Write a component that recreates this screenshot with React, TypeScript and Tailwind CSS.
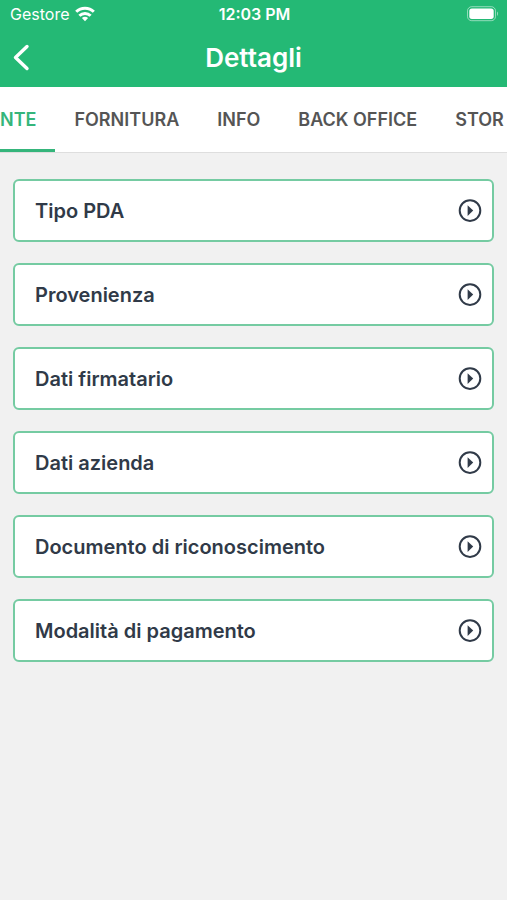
import { useState } from 'react';
import clsx from 'clsx';

const tabs = ['NTE', 'FORNITURA', 'INFO', 'BACK OFFICE', 'STOR'];

const sections = [
  'Tipo PDA',
  'Provenienza',
  'Dati firmatario',
  'Dati azienda',
  'Documento di riconoscimento',
  'Modalità di pagamento',
];

const WifiIcon = () => (
  <svg className="h-4 w-5" viewBox="0 0 20 16" fill="none" stroke="currentColor" strokeWidth="3" aria-hidden="true">
    <path d="M1.2 5.8a12.6 12.6 0 0 1 17.6 0" />
    <path d="M4.4 9.7a8 8 0 0 1 11.2 0" />
    <path d="M10 15.2 6.9 12.1a4.5 4.5 0 0 1 6.2 0Z" fill="currentColor" stroke="none" />
  </svg>
);

const BatteryIcon = () => (
  <svg className="h-4 w-8" viewBox="0 0 32 16" fill="none" aria-hidden="true">
    <rect x="0.5" y="0.7" width="28" height="14" rx="4.2" stroke="#fff" strokeOpacity="0.5" />
    <rect x="2.3" y="2.5" width="24.4" height="10.4" rx="2.6" fill="#fff" />
    <path d="M30 5.5c1.4.6 1.4 3.8 0 4.4Z" fill="#fff" fillOpacity="0.5" />
  </svg>
);

const PlayCircleIcon = () => (
  <svg className="h-6 w-6 shrink-0" viewBox="0 0 24 24" aria-hidden="true">
    <circle cx="12" cy="11.6" r="10.3" fill="none" stroke="currentColor" strokeWidth="2" />
    <path d="M9.6 6.2 15.2 11.6l-5.6 5.4Z" fill="currentColor" />
  </svg>
);

const StatusBar = () => (
  <div className="grid h-7 grid-cols-3 items-center pr-2 pl-2.5 text-base">
    <div className="flex items-center gap-1.5">
      <span>Gestore</span>
      <WifiIcon />
    </div>
    <span className="text-center font-semibold">12:03 PM</span>
    <div className="flex justify-end">
      <BatteryIcon />
    </div>
  </div>
);

const App = () => {
  const [activeTab, setActiveTab] = useState('NTE');

  return (
    <div className="min-h-screen bg-[#f1f1f1] font-['Inter',sans-serif]">
      <header className="bg-[#24b975] text-white">
        <StatusBar />
        <div className="grid h-[59px] grid-cols-[48px_1fr_48px] items-center">
          <button type="button" aria-label="Indietro" className="pl-3">
            <svg
              className="h-7 w-5"
              viewBox="0 0 20 28"
              fill="none"
              stroke="currentColor"
              strokeWidth="3.4"
              strokeLinecap="round"
              strokeLinejoin="round"
              aria-hidden="true"
            >
              <path d="M15 2.5 3.5 13.5 15 24.5" />
            </svg>
          </button>
          <h1 className="text-center text-[26px] leading-8 font-semibold">Dettagli</h1>
        </div>
      </header>

      <nav className="flex h-[66px] overflow-hidden border-b border-[#dedede] bg-white">
        {tabs.map((tab) => (
          <button
            key={tab}
            type="button"
            onClick={() => setActiveTab(tab)}
            className={clsx(
              'shrink-0 border-b-3 px-[19px] pt-1 text-lg font-semibold whitespace-nowrap first:pl-0',
              activeTab === tab ? 'border-[#35b57b] text-[#35b57b]' : 'border-transparent text-[#555555]'
            )}
          >
            {tab}
          </button>
        ))}
      </nav>

      <main className="flex flex-col gap-[21px] px-[13px] py-[26px]">
        {sections.map((section) => (
          <button
            key={section}
            type="button"
            className="flex h-[63px] items-center justify-between rounded-md border-2 border-[#75cba2] bg-white pr-2.5 pl-5 text-left text-xl font-semibold text-[#303a48]"
          >
            {section}
            <PlayCircleIcon />
          </button>
        ))}
      </main>
    </div>
  );
};

export default App;
